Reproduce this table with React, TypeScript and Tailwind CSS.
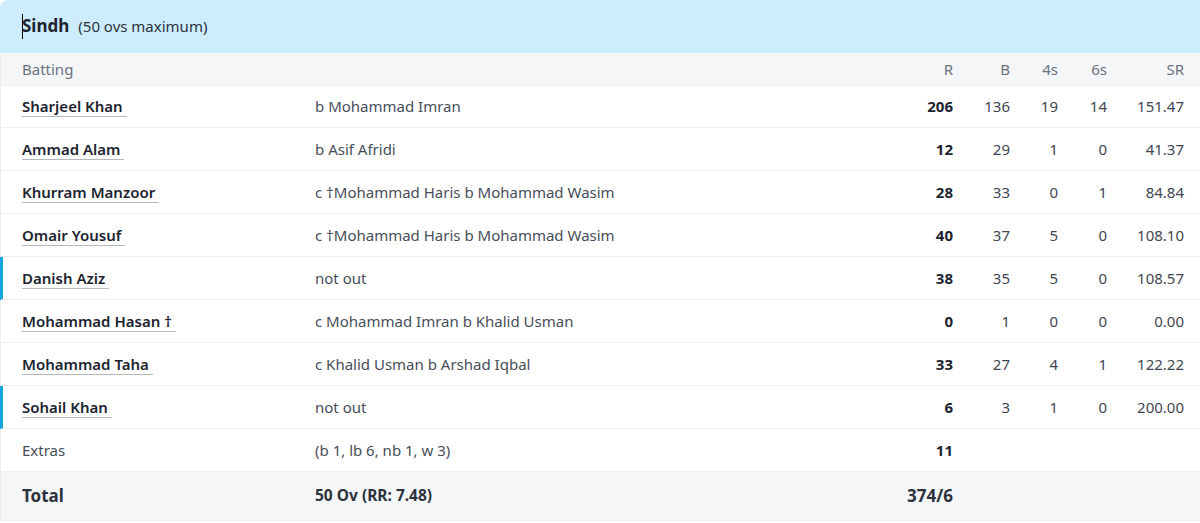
const batters = [
  { name: "Sharjeel Khan", dis: "b Mohammad Imran", r: "206", b: "136", f: "19", s: "14", sr: "151.47" },
  { name: "Ammad Alam", dis: "b Asif Afridi", r: "12", b: "29", f: "1", s: "0", sr: "41.37" },
  { name: "Khurram Manzoor", dis: "c \u2020Mohammad Haris b Mohammad Wasim", r: "28", b: "33", f: "0", s: "1", sr: "84.84" },
  { name: "Omair Yousuf", dis: "c \u2020Mohammad Haris b Mohammad Wasim", r: "40", b: "37", f: "5", s: "0", sr: "108.10" },
  { name: "Danish Aziz", dis: "not out", r: "38", b: "35", f: "5", s: "0", sr: "108.57", notOut: true },
  { name: "Mohammad Hasan \u2020", dis: "c Mohammad Imran b Khalid Usman", r: "0", b: "1", f: "0", s: "0", sr: "0.00" },
  { name: "Mohammad Taha", dis: "c Khalid Usman b Arshad Iqbal", r: "33", b: "27", f: "4", s: "1", sr: "122.22" },
  { name: "Sohail Khan", dis: "not out", r: "6", b: "3", f: "1", s: "0", sr: "200.00", notOut: true },
];

// columns line up with the header: name, dismissal, R, B, 4s, 6s, SR
const grid = "grid grid-cols-[293px_558px_80px_57px_48px_49px_77px] items-center";

export default function App() {
  return (
    <div className="w-[1200px] h-[523px] bg-white text-[15px] text-[#3f4652] font-['Noto_Sans','Open_Sans',sans-serif] overflow-hidden">
      <div className="flex h-[53px] items-center rounded-tl-lg bg-[#cdedfd] pb-px pl-[22px]">
        <span className="-mr-px h-[25px] w-px bg-black" />
        <span className="text-[17px] font-bold text-[#1d2430]">Sindh</span>
        <span className="ml-[9px] text-[15px] text-[#2c333d]">(50 ovs maximum)</span>
      </div>
      <div className="border-l border-[#eceef0]">
        <div className={`${grid} h-[33px] border-b border-[#eceef0] bg-[#f5f6f8] pl-[21px] text-[#6b7280]`}>
          <span>Batting</span>
          <span />
          <span className="text-right">R</span>
          <span className="text-right">B</span>
          <span className="text-right">4s</span>
          <span className="text-right">6s</span>
          <span className="text-right">SR</span>
        </div>
        {batters.map((p, i) => (
          <div
            key={p.name}
            className={`${grid} ${i === 0 ? "h-[42px]" : "h-[43px]"} border-b border-[#eceef0] ${
              p.notOut ? "-ml-px border-l-[3px] border-l-[#12a5e0] pl-[19px]" : "pl-[21px]"
            }`}
          >
            <span>
              <span className="border-b border-[#b4b8bf] pr-1 font-semibold text-[#1d2430]">{p.name}</span>
            </span>
            <span className="text-[#474e59]">{p.dis}</span>
            <span className="text-right font-bold text-[#1d2430]">{p.r}</span>
            <span className="text-right">{p.b}</span>
            <span className="text-right">{p.f}</span>
            <span className="text-right">{p.s}</span>
            <span className="text-right">{p.sr}</span>
          </div>
        ))}
        <div className={`${grid} h-[43px] border-b border-[#eceef0] pl-[21px]`}>
          <span className="text-[#474e59]">Extras</span>
          <span className="text-[#474e59]">(b 1, lb 6, nb 1, w 3)</span>
          <span className="text-right font-bold text-[#1d2430]">11</span>
        </div>
        <div className={`${grid} h-[49px] border-b border-[#eceef0] bg-[#f5f6f8] pl-[21px] text-[#2c333d]`}>
          <span className="text-[17px] font-bold">Total</span>
          <span className="text-[15.5px] font-bold">50 Ov (RR: 7.48)</span>
          <span className="text-right text-[17px] font-bold">374/6</span>
        </div>
      </div>
    </div>
  );
}
